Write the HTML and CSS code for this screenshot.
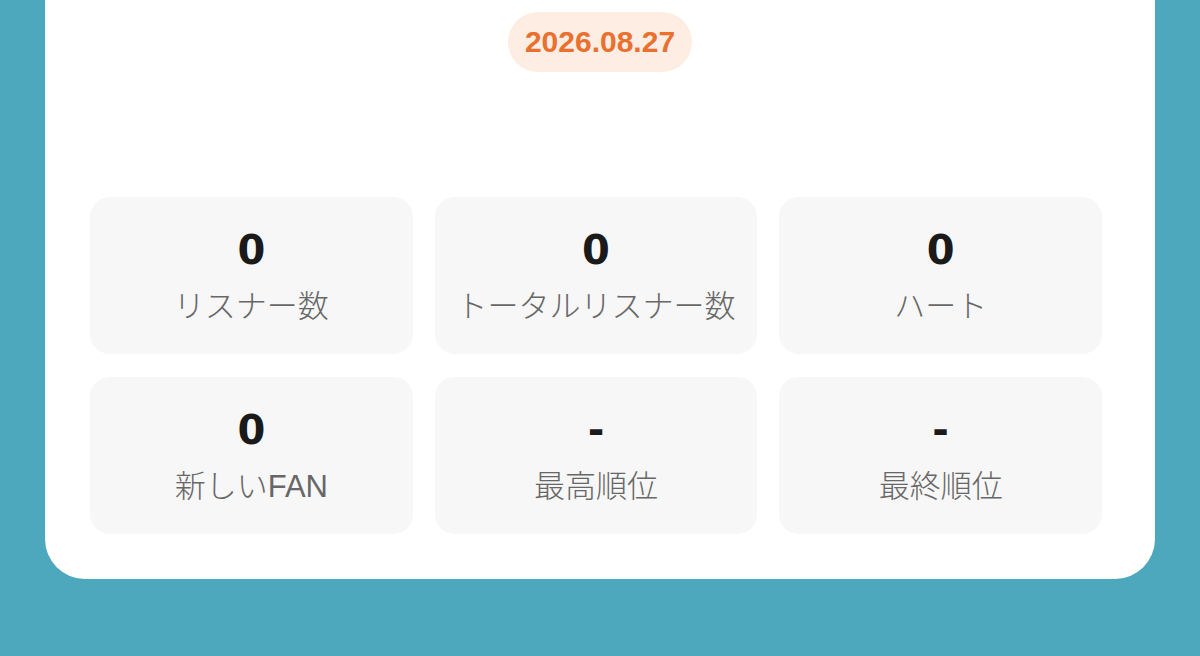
FILE: index.html
```html
<html>
  <head>
    <meta charset="utf-8">
    <link rel="stylesheet" href="styles.css">
  </head>

  <body>
    <div class="page">
      <div class="sheet">
        <div class="date-row">
          <span class="date">2026.08.27</span>
        </div>

        <div class="stats">
          <div class="stat">
            <div class="value">0</div>
            <div class="label">リスナー数</div>
          </div>
          <div class="stat">
            <div class="value">0</div>
            <div class="label">トータルリスナー数</div>
          </div>
          <div class="stat">
            <div class="value">0</div>
            <div class="label">ハート</div>
          </div>
          <div class="stat">
            <div class="value">0</div>
            <div class="label">新しいFAN</div>
          </div>
          <div class="stat">
            <div class="value">-</div>
            <div class="label">最高順位</div>
          </div>
          <div class="stat">
            <div class="value">-</div>
            <div class="label">最終順位</div>
          </div>
        </div>
      </div>
    </div>
  </body>
</html>
```

FILE: styles.css
```css
body {
  margin: 0;
  background: #4ea8bd;
  font-family: "Liberation Sans", "Noto Sans CJK JP", sans-serif;
}

.page {
  height: 656px;
  padding: 0 45px;
}

.sheet {
  background: #fff;
  border-radius: 0 0 40px 40px;
  padding: 12px 53px 45px 45px;
}

.date-row {
  display: flex;
  justify-content: center;
  padding-left: 8px;
}

.date {
  display: inline-block;
  height: 60px;
  line-height: 60px;
  padding: 0 17px;
  border-radius: 30px;
  background: #fdede3;
  color: #e9702f;
  font-size: 30px;
  font-weight: bold;
}

.stats {
  margin-top: 125px;
  display: grid;
  grid-template-columns: repeat(3, 1fr);
  gap: 23px 22px;
}

.stat {
  background: #f7f7f7;
  border-radius: 20px;
  padding: 29px 0 27px;
  text-align: center;
}

.value {
  font-family: "DejaVu Sans", sans-serif;
  font-size: 40px;
  line-height: 48px;
  font-weight: bold;
  color: #1a1a1a;
  margin-bottom: 13px;
}

.label {
  font-size: 31px;
  line-height: 40px;
  font-weight: 300;
  color: #676767;
}
```
